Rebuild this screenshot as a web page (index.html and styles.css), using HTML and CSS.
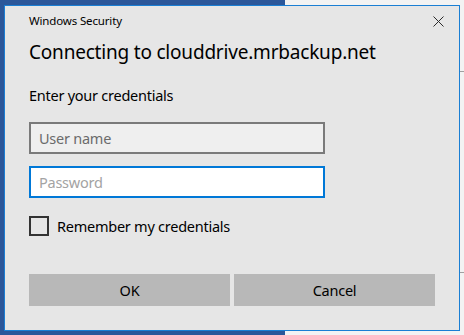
FILE: index.html
```html
<!DOCTYPE html>
<html lang="en">
<head>
   <meta charset="UTF-8">
   <meta name="viewport" content="width=device-width, initial-scale=1.0">
   <title>Windows Security</title>
   <link rel="stylesheet" href="styles.css">
</head>
<body>
   <div class="desktop">
      <div class="dialog">
         <div class="titlebar">
            <span class="app-name">Windows Security</span>
            <span class="close">
               <svg width="11" height="11" viewBox="0 0 11 11">
                  <path d="M0.5 0.5 L10.5 10.5 M10.5 0.5 L0.5 10.5" stroke="#2b2b2b" stroke-width="1" fill="none"/>
               </svg>
            </span>
         </div>
         <h1>Connecting to clouddrive.mrbackup.net</h1>
         <p class="prompt">Enter your credentials</p>
         <input class="field user" type="text" placeholder="User name">
         <input class="field pass" type="password" placeholder="Password">
         <label class="remember">
            <span class="box"></span>
            Remember my credentials
         </label>
         <div class="actions">
            <button>OK</button>
            <button>Cancel</button>
         </div>
      </div>
      <div class="edge">
         <span class="rule top"></span>
         <span class="rule bottom"></span>
      </div>
   </div>
</body>
</html>
```

FILE: styles.css
```css
* {
   box-sizing: border-box;
}

body {
   margin: 0;
   width: 464px;
   height: 335px;
   overflow: hidden;
   font-family: "Noto Sans", "Open Sans", sans-serif;
   background: linear-gradient(to right, #2b579a 285px, #f3f3f3 285px);
}

.desktop {
   display: flex;
   padding: 5px 0 0 4px;
}

.dialog {
   width: 456px;
   height: 326px;
   background: #e6e6e6;
   border: 1px solid #1a7fd4;
   padding: 7px 23px 0 24px;
   display: flex;
   flex-direction: column;
   align-items: flex-start;
}

.titlebar {
   display: flex;
   align-items: center;
   justify-content: space-between;
   width: 100%;
   height: 16px;
}

.app-name {
   font-size: 11.5px;
   letter-spacing: -0.15px;
   line-height: 16px;
   color: #000;
}

.close {
   display: flex;
   margin-right: -8px;
   margin-top: 1px;
}

h1 {
   margin: 9px 0 0 0;
   font-size: 19px;
   letter-spacing: -0.2px;
   font-weight: 400;
   line-height: 28px;
   color: #000;
}

.prompt {
   margin: 19px 0 0 0;
   font-size: 14.5px;
   letter-spacing: -0.25px;
   line-height: 20px;
   color: #000;
}

.field {
   display: block;
   width: 296px;
   height: 32px;
   margin: 0;
   padding: 0 8px;
   font-family: inherit;
   font-size: 14.5px;
   letter-spacing: -0.25px;
   outline: none;
}

.user {
   margin-top: 17px;
   background: #efefef;
   border: 2px solid #7a7a7a;
}

.user::placeholder {
   color: #6b6b6b;
}

.pass {
   margin-top: 12px;
   background: #fff;
   border: 2px solid #0078d7;
}

.pass::placeholder {
   color: #a3a3a3;
}

.remember {
   display: flex;
   align-items: center;
   gap: 8px;
   margin-top: 18px;
   font-size: 14.5px;
   letter-spacing: -0.25px;
   line-height: 20px;
   color: #000;
}

.box {
   width: 20px;
   height: 20px;
   border: 2px solid #333;
}

.actions {
   display: flex;
   gap: 4px;
   margin-top: 38px;
}

.actions button {
   width: 201px;
   height: 32px;
   border: none;
   background: #b8b8b8;
   font-family: inherit;
   font-size: 14.5px;
   letter-spacing: -0.25px;
   color: #000;
}

.edge {
   display: flex;
   flex-direction: column;
   width: 4px;
   padding-top: 66px;
}

.rule {
   display: block;
   height: 1px;
   background: #a0a0a0;
}

.rule.bottom {
   margin-top: 200px;
}
```
